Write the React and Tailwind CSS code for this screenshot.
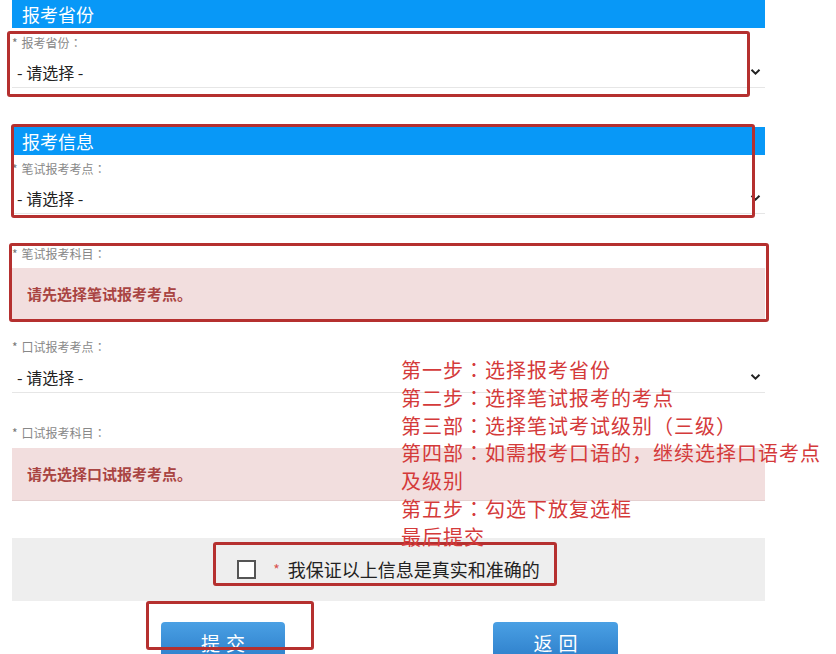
import React from "react";

const FONT = { fontFamily: '"Noto Sans CJK SC", "Noto Sans", sans-serif' };

function Punct({ text }) {
  const parts = [];
  let buf = "";
  for (const ch of text) {
    if (ch === "：" || ch === "（" || ch === "）") {
      if (buf) parts.push(buf);
      buf = "";
      parts.push(
        <span key={parts.length} className="[font-family:'Noto_Sans_CJK_TC',sans-serif]">{ch}</span>
      );
    } else {
      buf += ch;
    }
  }
  if (buf) parts.push(buf);
  return <>{parts}</>;
}

function Chevron() {
  return (
    <svg width="11" height="8" viewBox="0 0 11 8" className="absolute right-[4px]">
      <path d="M1.5 1.8 L5.5 5.6 L9.5 1.8" fill="none" stroke="#222" strokeWidth="2" />
    </svg>
  );
}

function Label({ text, className = "" }) {
  return (
    <div className={"h-[16px] flex items-center text-[12px] leading-[16px] text-[#888] " + className}>
      <span className="text-[#777]">*</span>
      <span className="ml-[4px]"><Punct text={text} /></span>
    </div>
  );
}

function Select({ className = "" }) {
  return (
    <div className={"relative h-[31px] flex items-center border-b border-[#e6e6e6] " + className}>
      <span className="pl-[5px] text-[16px] text-[#222]">- 请选择 -</span>
      <Chevron />
    </div>
  );
}

function Header({ text, className = "" }) {
  return (
    <div className={"h-[28px] bg-[#0898f7] flex items-center pl-[10px] " + className}>
      <span className="text-white text-[18px]">{text}</span>
    </div>
  );
}

function Alert({ text, className = "" }) {
  return (
    <div className={"h-[53px] bg-[#f2dede] border-b border-[#e4cfcf] flex items-center pl-[15px] " + className}>
      <span className="text-[15px] font-bold text-[#a94442]">{text}</span>
    </div>
  );
}

function RedBox({ className }) {
  return <div className={"absolute border-[3px] border-[#b5302f] rounded-[3px] " + className} />;
}

export default function App() {
  const steps = [
    "第一步：选择报考省份",
    "第二步：选择笔试报考的考点",
    "第三部：选择笔试考试级别（三级）",
    "第四部：如需报考口语的，继续选择口语考点",
    "及级别",
    "第五步：勾选下放复选框",
    "最后提交",
  ];
  return (
    <div className="relative w-[836px] h-[654px] overflow-hidden bg-white" style={FONT}>
      <div className="ml-[12px] w-[753px]">
        <Header text="报考省份" />
        <Label text="报考省份：" className="mt-[7px]" />
        <Select className="mt-[6px]" />
        <Header text="报考信息" className="mt-[39px]" />
        <Label text="笔试报考考点：" className="mt-[6px]" />
        <Select className="mt-[6px]" />
        <Label text="笔试报考科目：" className="mt-[32px]" />
        <Alert text="请先选择笔试报考考点。" className="mt-[6px]" />
        <Label text="口试报考考点：" className="mt-[18px]" />
        <Select className="mt-[7px]" />
        <Label text="口试报考科目：" className="mt-[32px]" />
        <Alert text="请先选择口试报考考点。" className="mt-[7px]" />
        <div className="mt-[37px] h-[63px] bg-[#eeeeee] flex items-center justify-center">
          <div className="flex items-center">
            <div className="w-[19px] h-[19px] border-[2px] border-[#555] bg-white" />
            <span className="ml-[17px] text-[14px] text-[#d9534f]">*</span>
            <span className="ml-[8px] text-[18px] text-[#222]">我保证以上信息是真实和准确的</span>
          </div>
        </div>
        <div className="mt-[21px] flex">
          <div className="ml-[149px] w-[124px] h-[40px] rounded-t-[4px] bg-gradient-to-b from-[#4aa0e4] to-[#2c7dc9] flex items-start justify-center pt-[7px]">
            <span className="text-white text-[19px] tracking-[6px] pl-[6px]">提交</span>
          </div>
          <div className="ml-[208px] w-[125px] h-[40px] rounded-t-[4px] bg-gradient-to-b from-[#4aa0e4] to-[#2c7dc9] flex items-start justify-center pt-[7px]">
            <span className="text-white text-[19px] tracking-[6px] pl-[6px]">返回</span>
          </div>
        </div>
      </div>

      <RedBox className="left-[7px] top-[31px] w-[743px] h-[66px]" />
      <RedBox className="left-[11px] top-[124px] w-[744px] h-[94px]" />
      <RedBox className="left-[9px] top-[243px] w-[760px] h-[79px]" />
      <RedBox className="left-[213px] top-[542px] w-[344px] h-[44px]" />
      <RedBox className="left-[146px] top-[601px] w-[168px] h-[49px]" />

      <div className="absolute left-[401px] top-[356px] text-[20px] leading-[27.8px] tracking-[1px] text-[#d43a3a]">
        {steps.map((s) => (
          <div key={s} className="whitespace-nowrap"><Punct text={s} /></div>
        ))}
      </div>
    </div>
  );
}
